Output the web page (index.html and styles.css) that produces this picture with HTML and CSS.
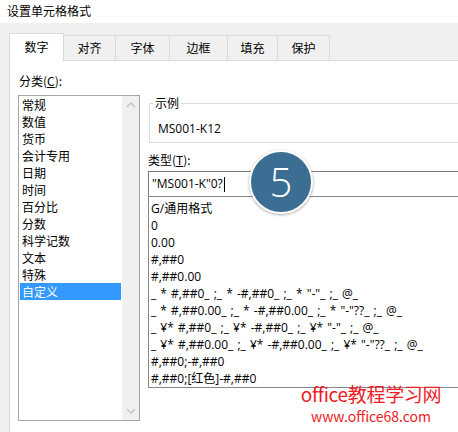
FILE: index.html
```html
<!DOCTYPE html>
<html lang="zh-CN">
<head>
<meta charset="utf-8">
<title>设置单元格格式</title>
<link rel="stylesheet" href="styles.css">
</head>
<body>
<div class="window">
  <div class="titlebar">设置单元格格式</div>
  <div class="dialog">
    <div class="tabs">
      <div class="tab active w54">数字</div>
      <div class="tab w53">对齐</div>
      <div class="tab w55">字体</div>
      <div class="tab w59">边框</div>
      <div class="tab w51">填充</div>
      <div class="tab w53">保护</div>
    </div>
    <div class="panel">
      <div class="leftcol">
        <div class="label">分类(<u>C</u>):</div>
        <div class="catlist">
          <div class="items">
            <div class="item">常规</div>
            <div class="item">数值</div>
            <div class="item">货币</div>
            <div class="item">会计专用</div>
            <div class="item">日期</div>
            <div class="item">时间</div>
            <div class="item">百分比</div>
            <div class="item">分数</div>
            <div class="item">科学记数</div>
            <div class="item">文本</div>
            <div class="item">特殊</div>
            <div class="item selected">自定义</div>
          </div>
          <div class="scrollbar">
            <svg class="arrow" width="10" height="6" viewBox="0 0 10 6"><path d="M1 5 L5 1 L9 5" fill="none" stroke="#c2c2c2" stroke-width="1.3"/></svg>
            <svg class="arrow" width="10" height="6" viewBox="0 0 10 6"><path d="M1 1 L5 5 L9 1" fill="none" stroke="#c2c2c2" stroke-width="1.3"/></svg>
          </div>
        </div>
      </div>
      <div class="rightcol">
        <fieldset class="sample">
          <legend>示例</legend>
          <div class="sampletext">MS001-K12</div>
        </fieldset>
        <div class="label typelabel">类型(<u>T</u>):</div>
        <div class="input">"MS001-K"0?<span class="caret"></span></div>
        <div class="fmtlist">
          <div class="item">G/通用格式</div>
          <div class="item">0</div>
          <div class="item">0.00</div>
          <div class="item">#,##0</div>
          <div class="item">#,##0.00</div>
          <div class="item">_ * #,##0_ ;_ * -#,##0_ ;_ * "-"_ ;_ @_</div>
          <div class="item">_ * #,##0.00_ ;_ * -#,##0.00_ ;_ * "-"??_ ;_ @_</div>
          <div class="item">_ ¥* #,##0_ ;_ ¥* -#,##0_ ;_ ¥* "-"_ ;_ @_</div>
          <div class="item">_ ¥* #,##0.00_ ;_ ¥* -#,##0.00_ ;_ ¥* "-"??_ ;_ @_</div>
          <div class="item">#,##0;-#,##0</div>
          <div class="item">#,##0;[红色]-#,##0</div>
        </div>
      </div>
    </div>
  </div>
  <div class="badge">5</div>
  <div class="watermark">
    <div class="wm1">office教程学习网</div>
    <div class="wm2">www.office68.com</div>
  </div>
</div>
</body>
</html>
```
FILE: styles.css
```css
html, body {
  margin: 0;
  padding: 0;
  background: #ffffff;
}
body {
  width: 458px;
  height: 432px;
  overflow: hidden;
  font-family: "Open Sans", "Noto Sans CJK SC", sans-serif;
  font-size: 12px;
  color: #000;
}
.window {
  position: relative;
  width: 458px;
  height: 432px;
  overflow: hidden;
}
.titlebar {
  height: 23px;
  line-height: 21px;
  padding-left: 7px;
  font-family: "Noto Sans CJK SC", sans-serif;
  font-size: 12px;
}
.dialog {
  background: #f0f0f0;
  height: 409px;
  padding: 10px 0 0 9px;
  box-sizing: border-box;
}
.tabs {
  display: flex;
  align-items: flex-end;
  height: 27px;
}
.tab {
  box-sizing: border-box;
  height: 25px;
  line-height: 23px;
  text-align: center;
  border: 1px solid #d9d9d9;
  border-bottom: none;
  border-left: none;
  background: #f0f0f0;
  font-family: "Noto Sans CJK SC", sans-serif;
}
.tab.active {
  height: 28px;
  line-height: 26px;
  background: #ffffff;
  border-left: 1px solid #d9d9d9;
  margin-bottom: -1px;
  position: relative;
  z-index: 1;
}
.w54 { width: 55px; }
.w53 { width: 52px; }
.w55 { width: 54px; }
.w59 { width: 58px; }
.w51 { width: 50px; }
.panel {
  display: flex;
  background: #ffffff;
  border-top: 1px solid #d9d9d9;
  border-left: 1px solid #d9d9d9;
  height: 380px;
  box-sizing: border-box;
  padding-left: 8px;
}
.label {
  font-family: "Noto Sans CJK SC", sans-serif;
  height: 20px;
  line-height: 20px;
  padding-left: 1px;
}
.leftcol {
  width: 122px;
  padding-top: 10px;
}
.catlist {
  margin-top: 4px;
  box-sizing: border-box;
  width: 122px;
  height: 326px;
  border: 1px solid #a5a5a5;
  display: flex;
}
.items {
  flex: 1;
  padding: 0 1px 0 1px;
}
.catlist .item {
  height: 17px;
  line-height: 17px;
  padding-left: 2px;
  font-family: "Noto Sans CJK SC", sans-serif;
}
.catlist .item.selected {
  background: #3399ff;
  color: #ffffff;
}
.scrollbar {
  width: 17px;
  background: #f0f0f0;
  display: flex;
  flex-direction: column;
  justify-content: space-between;
  align-items: center;
  padding: 6px 0 6px 0;
}
.arrow {
  display: block;
}
.rightcol {
  margin-left: 8px;
  width: 330px;
  flex: none;
}
.sample {
  margin: 35px 0 0 1px;
  padding: 0 0 5px 8px;
  border: 1px solid #dcdcdc;
  height: 47px;
  box-sizing: border-box;
}
.sample legend {
  padding: 0 2px;
  margin-left: -5px;
  line-height: 14px;
  font-family: "Noto Sans CJK SC", sans-serif;
}
.sampletext {
  line-height: 16px;
  padding-top: 11px;
}
.typelabel {
  margin-top: 7px;
  padding-left: 0;
}
.input {
  margin-top: 1px;
  box-sizing: border-box;
  height: 26px;
  line-height: 24px;
  border: 1px solid #7a7a7a;
  padding-left: 3px;
  display: flex;
  align-items: center;
}
.caret {
  display: inline-block;
  width: 1px;
  height: 15px;
  background: #000;
  margin-left: 1px;
}
.fmtlist {
  margin-top: -1px;
  box-sizing: border-box;
  height: 192px;
  border: 1px solid #828790;
  padding-top: 3px;
}
.fmtlist .item {
  height: 17px;
  line-height: 17px;
  padding-left: 2px;
  white-space: pre;
  word-spacing: 1px;
}
.badge {
  position: absolute;
  left: 249px;
  top: 150px;
  width: 60px;
  height: 60px;
  border: 2px solid #ffffff;
  border-radius: 50%;
  background: #3b6e92;
  box-shadow: 0 1px 3px rgba(0, 0, 0, 0.35);
  color: #ffffff;
  font-family: "Open Sans", sans-serif;
  font-weight: 300;
  font-size: 40px;
  line-height: 60px;
  text-align: center;
}
.watermark {
  position: absolute;
  left: 296px;
  top: 382px;
  width: 150px;
  text-align: center;
  color: #ee1c25;
  white-space: nowrap;
}
.wm1 {
  font-family: "Noto Sans CJK SC", sans-serif;
  font-size: 19px;
  line-height: 24px;
  letter-spacing: -0.3px;
}
.wm2 {
  margin-top: 2px;
  font-family: "Noto Sans CJK SC", sans-serif;
  font-size: 14px;
  line-height: 16px;
}
```
